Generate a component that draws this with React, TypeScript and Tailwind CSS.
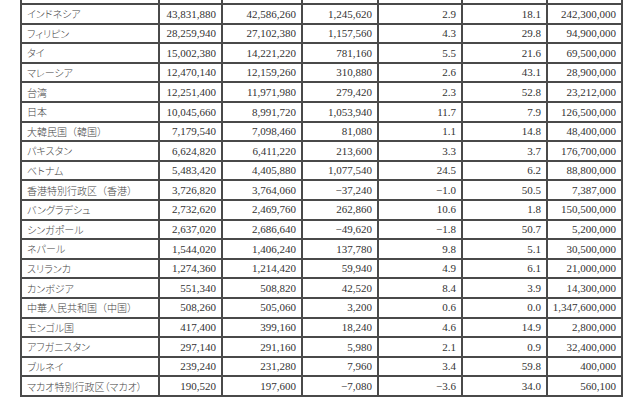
import React from "react"

// 国・地域別の一覧（上端の見出し行は画面外）
const rows: [string, string, string, string, string, string, string][] = [
  ["インドネシア", "43,831,880", "42,586,260", "1,245,620", "2.9", "18.1", "242,300,000"],
  ["フィリピン", "28,259,940", "27,102,380", "1,157,560", "4.3", "29.8", "94,900,000"],
  ["タイ", "15,002,380", "14,221,220", "781,160", "5.5", "21.6", "69,500,000"],
  ["マレーシア", "12,470,140", "12,159,260", "310,880", "2.6", "43.1", "28,900,000"],
  ["台湾", "12,251,400", "11,971,980", "279,420", "2.3", "52.8", "23,212,000"],
  ["日本", "10,045,660", "8,991,720", "1,053,940", "11.7", "7.9", "126,500,000"],
  ["大韓民国（韓国）", "7,179,540", "7,098,460", "81,080", "1.1", "14.8", "48,400,000"],
  ["パキスタン", "6,624,820", "6,411,220", "213,600", "3.3", "3.7", "176,700,000"],
  ["ベトナム", "5,483,420", "4,405,880", "1,077,540", "24.5", "6.2", "88,800,000"],
  ["香港特別行政区（香港）", "3,726,820", "3,764,060", "−37,240", "−1.0", "50.5", "7,387,000"],
  ["バングラデシュ", "2,732,620", "2,469,760", "262,860", "10.6", "1.8", "150,500,000"],
  ["シンガポール", "2,637,020", "2,686,640", "−49,620", "−1.8", "50.7", "5,200,000"],
  ["ネパール", "1,544,020", "1,406,240", "137,780", "9.8", "5.1", "30,500,000"],
  ["スリランカ", "1,274,360", "1,214,420", "59,940", "4.9", "6.1", "21,000,000"],
  ["カンボジア", "551,340", "508,820", "42,520", "8.4", "3.9", "14,300,000"],
  ["中華人民共和国（中国）", "508,260", "505,060", "3,200", "0.6", "0.0", "1,347,600,000"],
  ["モンゴル国", "417,400", "399,160", "18,240", "4.6", "14.9", "2,800,000"],
  ["アフガニスタン", "297,140", "291,160", "5,980", "2.1", "0.9", "32,400,000"],
  ["ブルネイ", "239,240", "231,280", "7,960", "3.4", "59.8", "400,000"],
  ["マカオ特別行政区（マカオ）", "190,520", "197,600", "−7,080", "−3.6", "34.0", "560,100"],
]

// 漢字だけの名前は全角幅のまま、カナは詰める
const noPalt = ["大韓民国（韓国）", "香港特別行政区（香港）", "中華人民共和国（中国）", "台湾", "日本"]

const grid = "grid grid-cols-[138px_63px_80px_76px_84px_85px_75px]"
const cell = "border-r-2 border-b-2 border-[#4a4a4a]"

export default function App() {
  return (
    <div className="w-[640px] h-[400px] overflow-hidden bg-white">
      <div className="ml-[20px] w-[603px] border-l-2 border-[#4a4a4a]">
        {/* 切れた見出し行 */}
        <div className={grid + " h-[5px]"}>
          {Array.from({ length: 7 }).map((_, i) => (
            <div key={i} className={cell} />
          ))}
        </div>
        {rows.map((r) => (
          <div key={r[0]} className={grid + " h-[19.6px]"}>
            <div
              className={
                cell +
                " flex items-center pl-[5px] text-[10px] text-[#444] font-['Noto_Sans_CJK_JP',sans-serif] font-light whitespace-nowrap " +
                (noPalt.includes(r[0]) ? "" : "[font-feature-settings:'palt']")
              }
            >
              {r[0]}
            </div>
            {r.slice(1).map((v, i) => (
              <div
                key={i}
                className={cell + " flex items-center justify-end pr-[5px] text-[11px] text-[#333] font-['Liberation_Serif',serif]"}
              >
                {v}
              </div>
            ))}
          </div>
        ))}
      </div>
    </div>
  )
}
